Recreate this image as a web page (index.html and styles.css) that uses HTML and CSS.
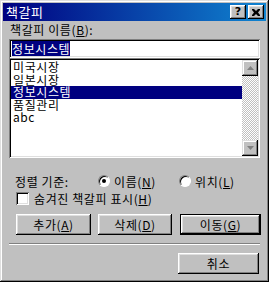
FILE: index.html
```html
<!DOCTYPE html>
<html>
<head>
    <title>책갈피</title>
    <link rel="stylesheet" href="styles.css">
</head>
<body>
    <div class="window">
        <div class="title-bar">
            <span class="title-text">책갈피</span>
            <div class="title-buttons">
                <span class="cap-btn">?</span>
                <span class="cap-btn">
                    <svg width="8" height="7" viewBox="0 0 8 7"><path d="M0 0h2l2 2 2-2h2v1l-2 2.5 2 2.5v1h-2l-2-2-2 2h-2v-1l2-2.5-2-2.5z" fill="#000"/></svg>
                </span>
            </div>
        </div>
        <div class="content">
            <div class="label">책갈피 이름(<u>B</u>):</div>
            <div class="field"><span class="sel">정보시스템</span></div>
            <div class="listbox">
                <div class="items">
                    <div class="item">미국시장</div>
                    <div class="item">일본시장</div>
                    <div class="item active">정보시스템</div>
                    <div class="item">품질관리</div>
                    <div class="item">abc</div>
                </div>
                <div class="scrollbar">
                    <span class="sb-btn"><svg width="7" height="4" viewBox="0 0 7 4"><path d="M3.5 0L7 4H0z" fill="#808080"/></svg></span>
                    <span class="sb-track"></span>
                    <span class="sb-btn"><svg width="7" height="4" viewBox="0 0 7 4"><path d="M0 0h7L3.5 4z" fill="#808080"/></svg></span>
                </div>
            </div>
            <div class="options">
                <div class="sort-row">
                    <span class="sort-label">정렬 기준:</span>
                    <span class="radio-opt first"><span class="radio checked"></span><span>이름(<u>N</u>)</span></span>
                    <span class="radio-opt"><span class="radio"></span><span>위치(<u>L</u>)</span></span>
                </div>
                <div class="check-row">
                    <span class="checkbox"></span><span>숨겨진 책갈피 표시(<u>H</u>)</span>
                </div>
                <div class="button-row">
                    <span class="btn w75"><span>추가(<u>A</u>)</span></span>
                    <span class="btn w74"><span>삭제(<u>D</u>)</span></span>
                    <span class="btn default"><span>이동(<u>G</u>)</span></span>
                </div>
            </div>
            <div class="separator"></div>
            <div class="bottom-row">
                <span class="btn cancel">취소</span>
            </div>
        </div>
    </div>
</body>
</html>
```

FILE: styles.css
```css
body {
    margin: 0;
    padding: 0;
    background-color: #c0c0c0;
    font-family: "Noto Sans CJK KR", "DejaVu Sans", sans-serif;
    font-size: 12px;
    letter-spacing: 0.6px;
    color: #000;
}
u {
    text-decoration: underline;
    text-underline-offset: 1px;
}
.window {
    width: 269px;
    height: 282px;
    box-sizing: border-box;
    padding: 3px;
    background-color: #c0c0c0;
    box-shadow: inset -1px -1px #000, inset 1px 1px #dfdfdf, inset -2px -2px #808080, inset 2px 2px #fff;
}
.title-bar {
    height: 18px;
    display: flex;
    align-items: center;
    justify-content: space-between;
    padding: 0 2px 0 3px;
    background: linear-gradient(to right, #000080, #1084d0);
}
.title-text {
    color: #fff;
    font-size: 13px;
    line-height: 18px;
}
.title-buttons {
    display: flex;
    gap: 2px;
}
.cap-btn {
    width: 16px;
    height: 14px;
    box-sizing: border-box;
    display: flex;
    align-items: center;
    justify-content: center;
    background-color: #c0c0c0;
    font-family: "DejaVu Sans", sans-serif;
    font-weight: bold;
    font-size: 11px;
    line-height: 14px;
    letter-spacing: 0;
    box-shadow: inset -1px -1px #000, inset 1px 1px #fff, inset -2px -2px #808080, inset 2px 2px #dfdfdf;
}
.content {
    padding: 1px 4px 0 6px;
}
.label {
    height: 16px;
    line-height: 16px;
    padding-left: 1px;
}
.field {
    margin-top: 1px;
    width: 251px;
    height: 19px;
    box-sizing: border-box;
    padding: 2px 3px;
    background-color: #fff;
    box-shadow: inset 1px 1px #808080, inset -1px -1px #fff, inset 2px 2px #000, inset -2px -2px #dfdfdf;
    line-height: 15px;
}
.sel {
    background-color: #000080;
    color: #fff;
    display: inline-block;
}
.listbox {
    width: 251px;
    height: 100px;
    box-sizing: border-box;
    padding: 2px;
    display: flex;
    background-color: #fff;
    box-shadow: inset 1px 1px #808080, inset -1px -1px #fff, inset 2px 2px #000, inset -2px -2px #dfdfdf;
}
.items {
    flex: 1;
    padding-top: 1px;
}
.item {
    height: 12.5px;
    line-height: 12.5px;
    padding-left: 2px;
}
.item.active {
    background-color: #000080;
    color: #fff;
}
.scrollbar {
    width: 16px;
    display: flex;
    flex-direction: column;
}
.sb-btn {
    height: 16px;
    display: flex;
    align-items: center;
    justify-content: center;
    background-color: #c0c0c0;
    box-shadow: inset -1px -1px #000, inset 1px 1px #dfdfdf, inset -2px -2px #808080, inset 2px 2px #fff;
}
.sb-track {
    flex: 1;
    background: repeating-conic-gradient(#c0c0c0 0 25%, #fff 0 50%) 0 0 / 2px 2px;
}
.options {
    padding-left: 6px;
}
.sort-row {
    margin-top: 14px;
    height: 18px;
    display: flex;
    align-items: center;
}
.sort-label {
    width: 83px;
}
.radio-opt {
    display: flex;
    align-items: center;
    gap: 4px;
}
.radio-opt.first {
    width: 81px;
}
.radio {
    width: 12px;
    height: 12px;
    box-sizing: border-box;
    border-radius: 50%;
    background-color: #fff;
    border: 1px solid;
    border-color: #808080 #fff #fff #808080;
    box-shadow: inset 1px 1px #000;
    display: flex;
    align-items: center;
    justify-content: center;
}
.radio.checked::after {
    content: "";
    width: 4px;
    height: 4px;
    border-radius: 50%;
    background-color: #000;
}
.check-row {
    height: 16px;
    display: flex;
    align-items: center;
    gap: 5px;
    padding-left: 1px;
}
.checkbox {
    width: 13px;
    height: 13px;
    box-sizing: border-box;
    background-color: #fff;
    box-shadow: inset 1px 1px #808080, inset -1px -1px #fff, inset 2px 2px #000, inset -2px -2px #dfdfdf;
}
.button-row {
    margin-top: 8px;
    display: flex;
    gap: 7px;
    padding-left: 1px;
}
.btn {
    height: 21px;
    box-sizing: border-box;
    display: flex;
    align-items: center;
    justify-content: center;
    background-color: #c0c0c0;
    box-shadow: inset -1px -1px #000, inset 1px 1px #fff, inset -2px -2px #808080, inset 2px 2px #dfdfdf;
}
.btn.w75 {
    width: 75px;
}
.btn.w74 {
    width: 74px;
}
.btn.default {
    width: 81px;
    margin-left: 1px;
    border: 1px solid #000;
}
.separator {
    margin: 8px 2px 0 0;
    border-top: 1px solid #808080;
    border-bottom: 1px solid #fff;
    height: 0;
}
.bottom-row {
    display: flex;
    justify-content: flex-end;
    margin-top: 8px;
    padding-right: 3px;
}
.btn.cancel {
    width: 81px;
}
```
